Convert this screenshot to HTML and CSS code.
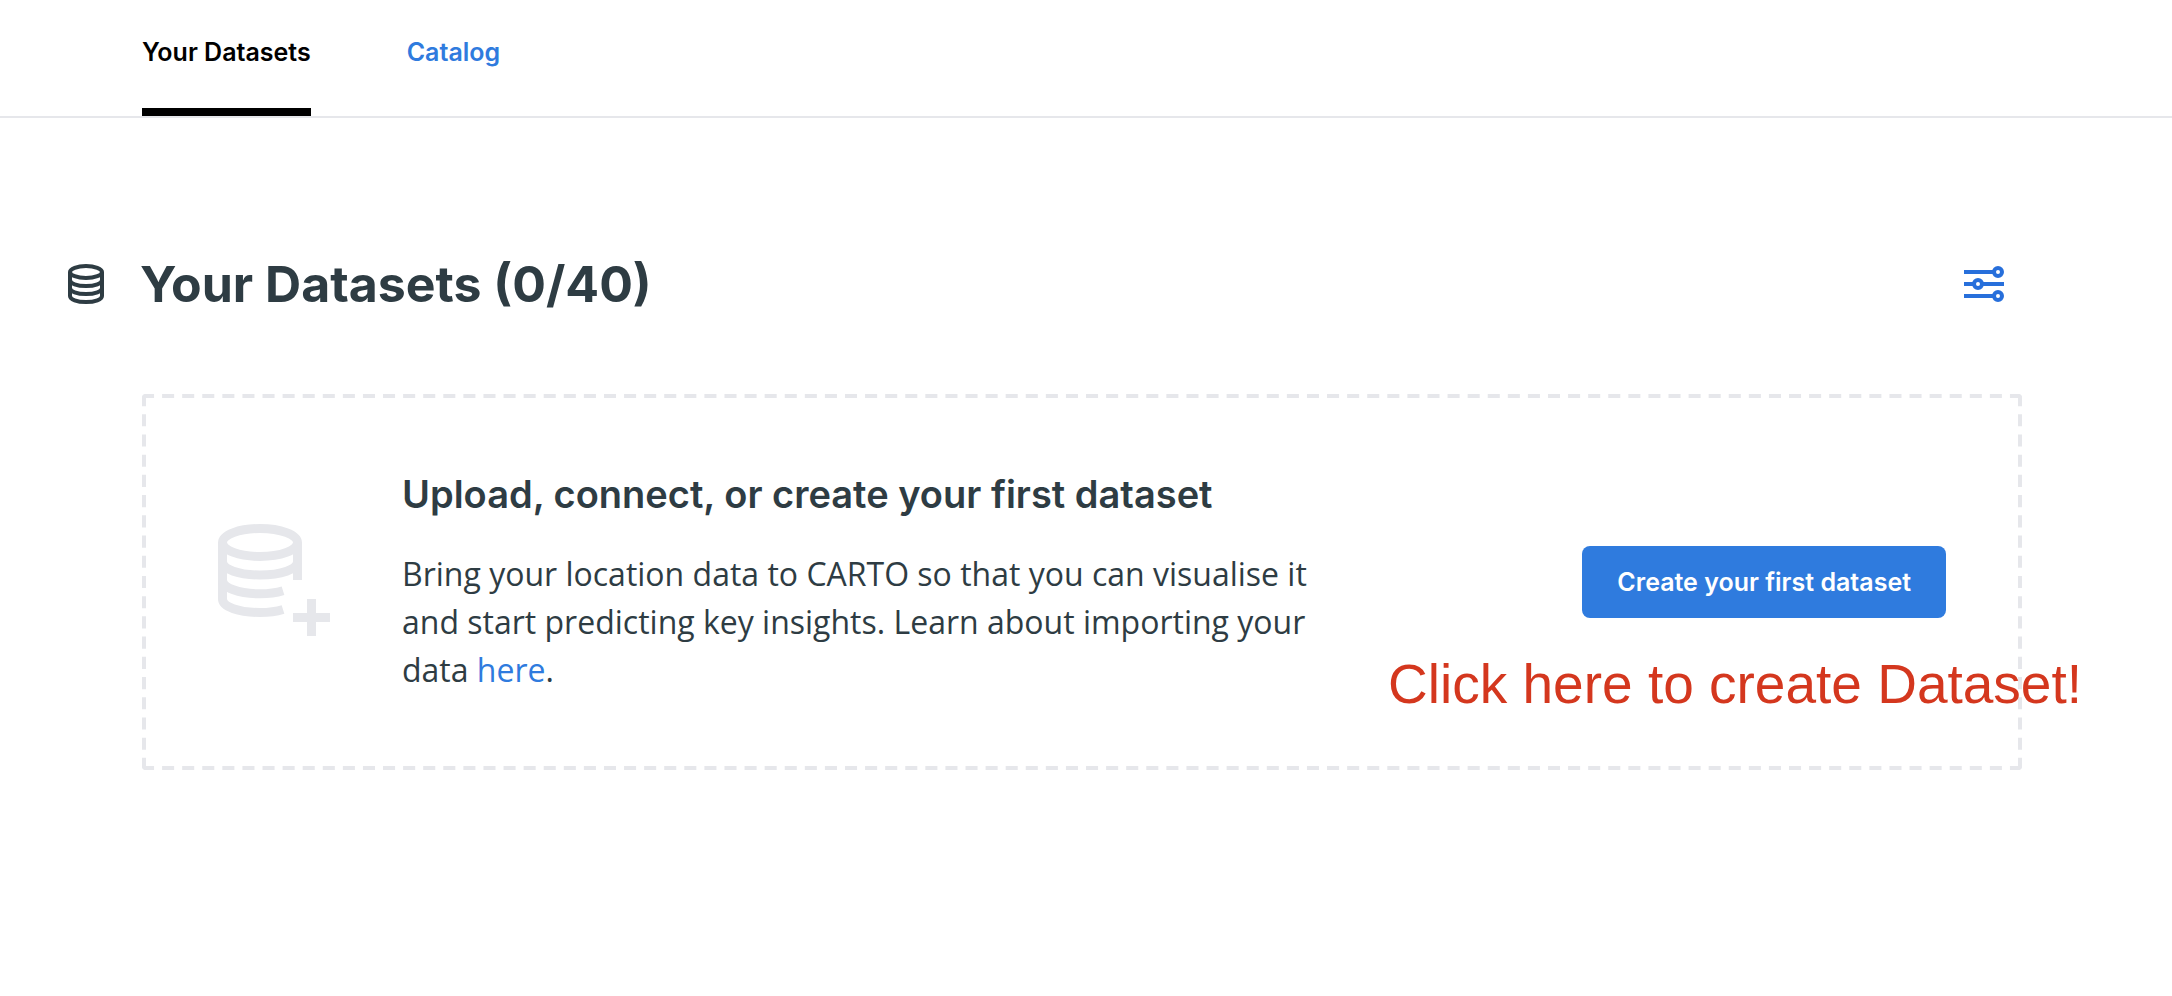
FILE: index.html
```
<!DOCTYPE html>
<html lang="en">
<head>
<meta charset="utf-8">
<title>Your Datasets</title>
<link rel="stylesheet" href="styles.css">
</head>
<body>
<nav class="tabs" aria-label="Data">
  <a class="tab tab-active" href="#datasets" aria-current="page">Your Datasets</a>
  <a class="tab" href="#catalog">Catalog</a>
</nav>
<main class="page">
  <header class="page-header">
    <svg class="title-icon" viewBox="0 0 36 40" fill="none" stroke="currentColor" stroke-width="4" aria-hidden="true">
      <ellipse cx="18" cy="8" rx="16" ry="6"/>
      <path d="M2 8v24c0 3.400 7 6 16 6s16-2.600 16-6V8"/>
      <path d="M2 16c0 3.400 7 6 16 6s16-2.600 16-6M2 24c0 3.400 7 6 16 6s16-2.600 16-6"/>
    </svg>
    <h1 class="title">Your Datasets (0/40)</h1>
    <button class="filter" type="button" aria-label="Filter and sort">
      <svg class="filter-icon" viewBox="0 0 40 36" fill="none" stroke="currentColor" stroke-width="4" aria-hidden="true">
        <path d="M0 6h30M0 18h10M18 18h22M0 30h30"/>
        <circle cx="34" cy="6" r="4"/>
        <circle cx="14" cy="18" r="4"/>
        <circle cx="34" cy="30" r="4"/>
      </svg>
    </button>
  </header>
  <section class="empty">
    <!-- Dashed frame; pathLength keeps a whole dash at every corner -->
    <svg class="frame" aria-hidden="true">
      <line x1="0" y1="0" x2="100%" y2="0" pathLength="1872"/>
      <line x1="0" y1="100%" x2="100%" y2="100%" pathLength="1872"/>
      <line x1="0" y1="0" x2="0" y2="100%" pathLength="372"/>
      <line x1="100%" y1="0" x2="100%" y2="100%" pathLength="372"/>
    </svg>
    <svg class="empty-icon" viewBox="0 0 112 112" fill="none" stroke="currentColor" stroke-width="9" aria-hidden="true">
      <ellipse cx="42" cy="18.500" rx="37.500" ry="14"/>
      <path d="M79.500 18.500V56"/>
      <path d="M4.500 18.500V75c0 7.800 16.500 13.500 37.500 13.500c8.500 0 16.500-1 23-3"/>
      <path d="M4.500 37.500c0 7.800 16.500 13.500 37.500 13.500s37.500-5.700 37.500-13.500"/>
      <path d="M4.500 56c0 7.800 16.500 13.800 37.500 13.800c8.500 0 16.500-1 23-3"/>
      <path d="M93.500 75v37M75 93.500h37"/>
    </svg>
    <div class="empty-text">
      <h2 class="empty-title">Upload, connect, or create your first dataset</h2>
      <p class="empty-copy">Bring your location data to CARTO so that you can visualise it and start predicting key insights. Learn about importing your data <a class="link" href="#import">here</a>.</p>
    </div>
    <button class="create" type="button">Create your first dataset</button>
    <p class="callout">Click here to create Dataset!</p>
  </section>
</main>
</body>
</html>
```

FILE: styles.css
```
* {
  box-sizing: border-box;
}

body {
  margin: 0;
  background: #fff;
  color: #2e3c43;
  font-family: "Open Sans", sans-serif;
}

.tabs {
  display: flex;
  gap: 96px;
  padding: 0 142px;
  border-bottom: 2px solid #e6e7eb;
}

.tab {
  padding: 36px 0 40px;
  border-bottom: 8px solid transparent;
  color: #2f7bde;
  font: 600 25px/32px Inter, sans-serif;
  text-decoration: none;
}

.tab-active {
  border-color: #000;
  color: #000;
}

.page {
  padding: 136px 150px 72px 68px;
}

.page-header {
  display: flex;
  align-items: center;
  padding-right: 18px;
}

.title-icon {
  width: 36px;
  height: 40px;
  margin-right: 36px;
}

.title {
  flex: 1;
  margin: 0;
  font: 700 50px/60px Inter, sans-serif;
}

.filter {
  display: flex;
  padding: 0;
  border: 0;
  background: none;
  color: #276fdb;
}

.filter-icon {
  width: 40px;
  height: 36px;
}

.empty {
  position: relative;
  display: flex;
  align-items: center;
  margin: 80px 0 0 74px;
  padding: 76px;
}

.frame {
  position: absolute;
  inset: 0;
  width: 100%;
  height: 100%;
  overflow: hidden;
  border-radius: 4px;
  stroke: #e6e7eb;
  stroke-width: 8px;
  stroke-dasharray: 12 8;
}

.empty-icon {
  flex: none;
  width: 112px;
  height: 112px;
  margin: 0 72px 4px 0;
  color: #e6e7eb;
}

.empty-text {
  width: 920px;
  margin-right: auto;
}

.empty-title {
  margin: 0 0 32px;
  font: 600 38px/48px Inter, sans-serif;
}

.empty-copy {
  margin: 0;
  font-size: 32px;
  line-height: 48px;
}

.link {
  color: #2f7bde;
  text-decoration: none;
}

.create {
  position: relative;
  padding: 20px 35px;
  border: 0;
  border-radius: 8px;
  background: #2f7bde;
  color: #fff;
  font: 600 25px/32px Inter, sans-serif;
  white-space: nowrap;
}

.callout {
  position: absolute;
  right: -60px;
  bottom: 54px;
  margin: 0;
  color: #d4371e;
  font: 55px/64px "Liberation Sans", sans-serif;
  white-space: nowrap;
}
```
